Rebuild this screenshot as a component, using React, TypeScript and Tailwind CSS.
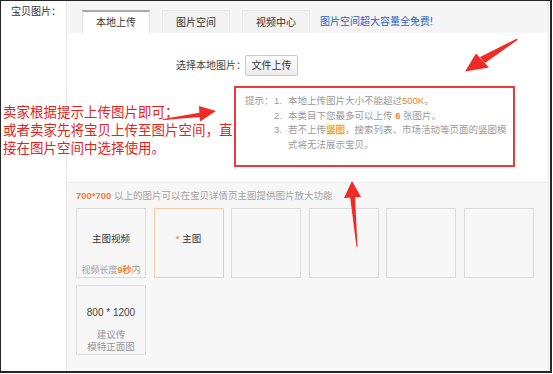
import React from 'react';

const font = { fontFamily: '"Liberation Sans","Noto Sans CJK SC",sans-serif' };

const Tab: React.FC<{ label: string; active?: boolean }> = ({ label, active }) => (
    <div
        className={
            'w-[68px] h-[23px] flex items-center justify-center text-[10px] text-[#333] border border-b-0 ' +
            (active ? 'bg-white border-[#e3e3e3] border-t-2 border-t-[#a9a9a9]' : 'bg-[#f2f2f2] border-[#e8e8e8]')
        }
    >
        {label}
    </div>
);

const Arrows: React.FC = () => (
    // red hand-drawn style arrows laid over the screenshot
    <svg className="absolute inset-0 pointer-events-none" width="553" height="374" viewBox="0 0 553 374">
        <polygon points="163,119 201,112.5 201,117 163,120" fill="#ee2b24" />
        <polygon points="199,106 216,111 200,121.5" fill="#ee2b24" />
        <polygon points="517,38.5 517.5,40 485,63 480,57" fill="#ee2b24" />
        <polygon points="465,71.5 476,53.5 489,67.5" fill="#ee2b24" />
        <polygon points="356.5,247 357.5,247 355,196 350,196" fill="#ee2b24" />
        <polygon points="352,181 344,198 361,197" fill="#ee2b24" />
    </svg>
);

const Slot: React.FC<{ active?: boolean; children?: React.ReactNode }> = ({ active, children }) => (
    <div
        className={
            'w-[70px] h-[70px] border flex flex-col items-center bg-[#f7f7f7] ' +
            (active ? 'border-[#f7c9a8]' : 'border-[#dcdcdc]')
        }
    >
        {children}
    </div>
);

export default function App() {
    return (
        <div className="relative w-[553px] h-[374px] bg-white overflow-hidden" style={font}>
            <div className="w-[552px] h-[373px] border-t border-l border-r-2 border-b-2 border-[#262626] flex">
                {/* label column */}
                <div className="w-[65px] shrink-0 pl-[10px] pt-[3px] text-[10px] text-[#333]">宝贝图片：</div>

                {/* main panel */}
                <div className="flex-1 flex flex-col border-l border-r border-[#e8e8e8] mr-[1px]">
                    {/* tab bar */}
                    <div className="h-[32px] bg-[#f5f5f5] flex items-end pl-[15px] gap-[12px]">
                        <Tab label="本地上传" active />
                        <Tab label="图片空间" />
                        <Tab label="视频中心" />
                        <div className="h-[23px] flex items-center -ml-[2px] text-[10px] text-[#2c5fcb]">图片空间超大容量全免费!</div>
                    </div>

                    {/* upload area */}
                    <div className="h-[149px] bg-white">
                        <div className="mt-[22px] ml-[109px] flex items-center h-[21px]">
                            <span className="text-[10px] text-[#444]">选择本地图片：</span>
                            <button className="ml-[-1px] w-[53px] h-[21px] border border-[#c9c9c9] rounded-[2px] bg-gradient-to-b from-white to-[#ececec] text-[10px] text-[#333]">
                                文件上传
                            </button>
                        </div>
                        <div className="mt-[10px] ml-[167px] w-[281px] h-[81px] border-2 border-[#ee3a3a] pt-[6px] pl-[9px] text-[9.5px] leading-[14.5px] text-[#9a9a9a] whitespace-nowrap">
                            <div className="flex">
                                <span className="w-[29px]">提示：</span>
                                <span className="w-[14px]">1.</span>
                                <span>
                                    本地上传图片大小不能超过<span className="text-[#f2822f]">500K</span>。
                                </span>
                            </div>
                            <div className="flex pl-[29px]">
                                <span className="w-[14px]">2.</span>
                                <span>
                                    本类目下您最多可以上传 <span className="text-[#f2822f] font-bold">6</span> 张图片。
                                </span>
                            </div>
                            <div className="flex pl-[29px]">
                                <span className="w-[14px]">3.</span>
                                <span>
                                    若不上传<span className="text-[#f2822f] bg-[#fdf1c8]">竖图</span>，搜索列表、市场活动等页面的竖图模
                                    <br />
                                    式将无法展示宝贝。
                                </span>
                            </div>
                        </div>
                    </div>

                    {/* image slots */}
                    <div className="flex-1 bg-[#f7f7f7] border-t border-[#ebebeb] pl-[9px] pt-[6px]">
                        <div className="text-[9.5px] leading-[14px] text-[#a3a3a3] mb-[5px]">
                            <span className="text-[#f07c43] font-bold">700*700</span> 以上的图片可以在宝贝详情页主图提供图片放大功能
                        </div>
                        <div className="grid grid-cols-[repeat(6,70px)] gap-x-[7.5px] gap-y-[7px]">
                            <Slot>
                                <div className="mt-[23px] text-[9.5px] leading-[14px] text-[#333]">主图视频</div>
                                <div className="mt-auto mb-[1px] text-[9px] leading-[12px] text-[#a0a0a0]">
                                    视频长度<span className="text-[#f2822f] font-bold">9秒</span>内
                                </div>
                            </Slot>
                            <Slot active>
                                <div className="mt-[23px] text-[9.5px] leading-[14px] text-[#333]">
                                    <span className="text-[#f2822f]">*</span> 主图
                                </div>
                            </Slot>
                            <Slot />
                            <Slot />
                            <Slot />
                            <Slot />
                            <Slot>
                                <div className="mt-[21px] text-[10px] leading-[12px] text-[#444]">800 * 1200</div>
                                <div className="mt-[10px] text-[9.5px] leading-[12px] text-[#999] text-center">
                                    建议传
                                    <br />
                                    模特正面图
                                </div>
                            </Slot>
                        </div>
                    </div>
                </div>
            </div>

            {/* annotation */}
            <div className="absolute left-[3px] top-[104px] text-[13.5px] leading-[18px] text-[#e8231c] whitespace-nowrap">
                卖家根据提示上传图片即可；
                <br />
                或者卖家先将宝贝上传至图片空间，直
                <br />
                接在图片空间中选择使用。
            </div>
            <Arrows />
        </div>
    );
}
